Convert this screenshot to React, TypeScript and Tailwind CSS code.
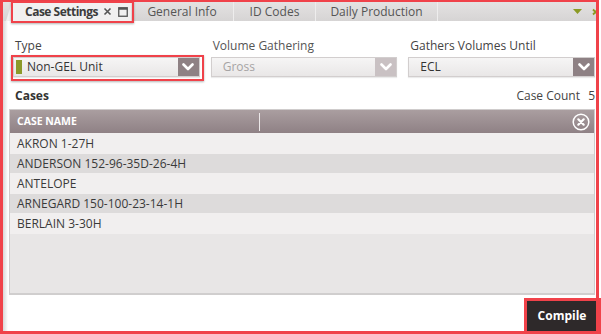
import React from 'react';

const font = { fontFamily: '"Open Sans", "Noto Sans", sans-serif' };

function Chevron({ light }: { light?: boolean }) {
  return (
    <div className={`w-[21px] h-full flex items-center justify-center ${light ? 'bg-[#c9c1c3]' : 'bg-[#8e8184]'}`}>
      <svg width="12" height="8" viewBox="0 0 12 8">
        <path d="M1.5 1.5 L6 6 L10.5 1.5" fill="none" stroke="#fff" strokeWidth="2.6" strokeLinecap="round" strokeLinejoin="round" />
      </svg>
    </div>
  );
}

function Select({ value, disabled, strip }: { value: string; disabled?: boolean; strip?: boolean }) {
  return (
    <div className="h-[20px] flex items-stretch border border-[#d2cece] bg-gradient-to-b from-[#f6f5f5] to-[#e9e7e7] shadow-[0_1px_1px_rgba(0,0,0,0.08)]">
      {strip && <div className="w-[6px] my-[2px] ml-[2px] bg-[#8c9a2a]" />}
      <div className={`flex-1 flex items-center text-[12px] ${strip ? 'pl-[5px]' : 'pl-[11px]'} ${disabled ? 'text-[#a6a4a4]' : 'text-[#333]'}`}>
        {value}
      </div>
      <Chevron light={disabled} />
    </div>
  );
}

const cases = ['AKRON 1-27H', 'ANDERSON 152-96-35D-26-4H', 'ANTELOPE', 'ARNEGARD 150-100-23-14-1H', 'BERLAIN 3-30H'];

export default function App() {
  return (
    <div className="relative w-[601px] h-[334px] overflow-hidden bg-white text-[#3a3a3a]" style={font}>
      {/* left shadow */}
      <div className="absolute left-[3px] top-0 bottom-0 w-[5px] bg-gradient-to-r from-[#d8d8d8] to-white" />

      <div className="relative flex flex-col h-full pl-[3px] pr-[5px] pt-[2px]">
        {/* tab bar */}
        <div className="h-[19px] flex items-stretch bg-gradient-to-b from-[#e4e2e2] to-[#d6d4d4] text-[12px] shrink-0 whitespace-nowrap">
          <div className="w-[6px]" />
          <div className="w-[125px] bg-[#f1f0f0] flex items-center pl-[19px] gap-[4px] font-bold text-[#3b3b3b] text-[12px] tracking-[-0.5px] [clip-path:polygon(6px_0,100%_0,100%_100%,0_100%)] -ml-[3px]">
            <span>Case Settings</span>
            <svg width="9" height="9" viewBox="0 0 9 9" className="ml-[1px] shrink-0">
              <path d="M1.5 1.5 L7.5 7.5 M7.5 1.5 L1.5 7.5" stroke="#555" strokeWidth="1.6" />
            </svg>
            <svg width="10" height="10" viewBox="0 0 10 10" className="ml-[2px] shrink-0">
              <rect x="0.75" y="0.75" width="8.5" height="8.5" fill="none" stroke="#555" strokeWidth="1.3" />
              <rect x="0.75" y="0.75" width="8.5" height="2" fill="#555" />
            </svg>
          </div>
          <div className="w-[103px] flex items-center justify-center text-[#555] border-r border-[#eeeded]">General Info</div>
          <div className="w-[82px] flex items-center justify-center text-[#555] border-r border-[#eeeded]">ID Codes</div>
          <div className="w-[122px] flex items-center justify-center text-[#555] border-r border-[#eeeded]">Daily Production</div>
          <div className="flex-1 flex items-center justify-end gap-[10px]">
            <svg width="9" height="6" viewBox="0 0 9 6">
              <path d="M0 0 H9 L4.5 5 Z" fill="#8b9a24" />
            </svg>
            <svg width="7" height="8" viewBox="0 0 7 8" className="-mr-[3px]">
              <path d="M1 1.5 L6 6.5 M6 1.5 L1 6.5" stroke="#8b9a24" strokeWidth="1.8" />
            </svg>
          </div>
        </div>

        {/* content */}
        <div className="flex-1 flex flex-col pl-[6px] pr-[1px]">
          <div className="grid grid-cols-3 gap-x-[11px] pl-[4px] mt-[17px]">
            <div>
              <div className="text-[12px] text-[#444] leading-[16px] mb-[3px] pl-[2px]">Type</div>
              <Select value="Non-GEL Unit" strip />
            </div>
            <div>
              <div className="text-[12px] text-[#555] leading-[16px] mb-[3px] pl-[2px]">Volume Gathering</div>
              <Select value="Gross" disabled />
            </div>
            <div>
              <div className="text-[12px] text-[#444] leading-[16px] mb-[3px] pl-[2px]">Gathers Volumes Until</div>
              <Select value="ECL" />
            </div>
          </div>

          <div className="flex items-center justify-between mt-[10px] h-[18px] pl-[6px] text-[12px]">
            <span className="font-bold text-[#333]">Cases</span>
            <span className="text-[#444]">
              Case Count <span className="ml-[5px]">5</span>
            </span>
          </div>

          {/* grid */}
          <div className="mt-[4px] h-[186px] flex flex-col border border-[#cfcccc] border-b-[2px] border-b-[#d0cece] bg-[#e8e6e6]">
            <div className="h-[23px] shrink-0 flex items-center bg-gradient-to-b from-[#aa9ea0] to-[#8f8185]">
              <div className="w-[250px] h-[18px] border-r border-[#ece8e9] flex items-center pl-[7px] text-[10.5px] font-bold text-white">
                CASE NAME
              </div>
              <div className="flex-1 flex justify-end pr-[4px]">
                <svg width="18" height="18" viewBox="0 0 18 18">
                  <circle cx="9" cy="9" r="7.8" fill="none" stroke="#fff" strokeWidth="1.5" />
                  <path d="M6.3 6.3 L11.7 11.7 M11.7 6.3 L6.3 11.7" stroke="#fff" strokeWidth="2.2" strokeLinecap="round" />
                </svg>
              </div>
            </div>
            {cases.map((c, i) => (
              <div
                key={c}
                className={`flex items-center pl-[7px] text-[12px] text-[#3a3a3a] ${i % 2 === 0 ? 'h-[21px] bg-[#f1efef]' : 'h-[19px] bg-[#dddbdb]'}`}
              >
                {c}
              </div>
            ))}
          </div>

          <div className="flex-1 flex justify-end items-end pb-[3px]">
            <button className="w-[70px] h-[30px] bg-[#2e292a] text-white font-bold text-[12px] mr-[-2px]">Compile</button>
          </div>
        </div>
      </div>

      {/* annotation boxes */}
      <div className="absolute left-0 top-0 w-[599px] h-[334px] border-l-[3px] border-t-[2px] border-r-[3px] border-b-[3px] border-[#f0424a] pointer-events-none" />
      <div className="absolute left-0 bottom-0 w-[601px] h-[3px] bg-[#f0424a]" />
      <div className="absolute left-[11px] top-[1px] w-[123px] h-[22px] border-[2px] border-[#f0424a] shadow-[0_1px_2px_rgba(0,0,0,0.3)] pointer-events-none" />
      <div className="absolute left-[11px] top-[55px] w-[193px] h-[26px] border-[2px] border-[#f0424a] shadow-[0_1px_2px_rgba(0,0,0,0.3)] pointer-events-none" />
      <div className="absolute left-[524px] top-[298px] w-[77px] h-[36px] border-[3px] border-[#f0424a] pointer-events-none" />
    </div>
  );
}
